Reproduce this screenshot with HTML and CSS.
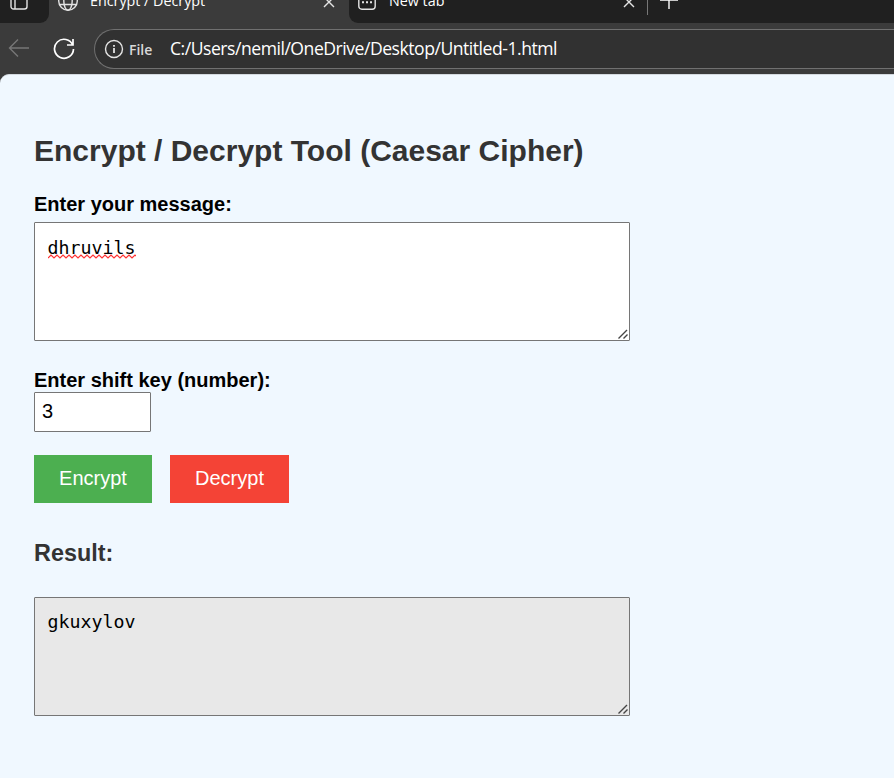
FILE: index.html
```html
<!DOCTYPE html>
<html lang="en">
<head>
<meta charset="utf-8">
<title>Encrypt / Decrypt</title>
<link rel="stylesheet" href="styles.css">
</head>
<body>
<header class="browser">
  <div class="tabs">
    <div class="tab-menu"><svg width="18" height="18" viewBox="0 0 18 18"><rect x="1" y="1" width="16" height="16" rx="2.5"/><path d="M5 1v16M1 5h16"/></svg></div>
    <div class="tab active">
      <svg width="20" height="20" viewBox="0 0 20 20"><circle cx="10" cy="10" r="9.3"/><ellipse cx="10" cy="10" rx="4.2" ry="9.3"/><path d="M1.5 6.5h17M1.5 13.5h17"/></svg>
      <span class="tab-title title-one">Encrypt / Decrypt</span>
      <svg class="close" width="12" height="12" viewBox="0 0 12 12"><path d="M1 1l10 10M11 1L1 11"/></svg>
    </div>
    <div class="tab">
      <svg width="18" height="18" viewBox="0 0 18 18"><rect x=".8" y=".8" width="16.4" height="16.4" rx="3"/><path d="M4 10.3h2M8 10.3h2M12 10.3h2" stroke-width="2"/></svg>
      <span class="tab-title title-two">New tab</span>
      <svg class="close" width="12" height="12" viewBox="0 0 12 12"><path d="M1 1l10 10M11 1L1 11"/></svg>
    </div>
    <div class="new-tab"><svg width="18" height="18" viewBox="0 0 18 18"><path d="M9 0v18M0 9h18"/></svg></div>
  </div>
  <div class="toolbar">
    <svg class="back" width="22" height="20" viewBox="0 0 22 20"><path d="M21 10H1.5M10 1.5L1.5 10l8.500 8.500"/></svg>
    <svg class="reload" width="22" height="22" viewBox="0 0 22 22"><path d="M19.800 7.200A9.500 9.500 0 1 0 20.500 11M20 1v6h-6"/></svg>
    <div class="address">
      <svg width="20" height="20" viewBox="0 0 20 20"><circle cx="10" cy="10" r="8.500"/><path d="M10 9v5" stroke-width="1.800"/><path d="M10 6v1.800" stroke-width="1.800"/></svg>
      <span class="scheme">File</span>
      <span class="url">C:/Users/nemil/OneDrive/Desktop/Untitled-1.html</span>
    </div>
  </div>
</header>
<main class="page">
  <h2>Encrypt / Decrypt Tool (Caesar Cipher)</h2>
  <label class="message-label" for="message">Enter your message:</label>
  <div class="field message-field">
    <textarea id="message" spellcheck="false">dhruvils</textarea>
    <svg class="squiggle" width="88" height="6" viewBox="0 0 88 6"><path d="M0 4l3-3 3 3 3-3 3 3 3-3 3 3 3-3 3 3 3-3 3 3 3-3 3 3 3-3 3 3 3-3 3 3 3-3 3 3 3-3 3 3 3-3 3 3 3-3 3 3 3-3 3 3 3-3 3 3 3-3 1 1"/></svg>
    <svg class="grip" width="10" height="10" viewBox="0 0 10 10"><path d="M.5 9.500l8.500-8.500M5.500 9.500l4-4"/></svg>
  </div>
  <label class="key-label" for="key">Enter shift key (number):</label>
  <input id="key" type="text" value="3">
  <div class="actions">
    <button class="encrypt">Encrypt</button>
    <button class="decrypt">Decrypt</button>
  </div>
  <h3>Result:</h3>
  <div class="field result-field">
    <textarea class="result" readonly spellcheck="false">gkuxylov</textarea>
    <svg class="grip" width="10" height="10" viewBox="0 0 10 10"><path d="M.5 9.500l8.500-8.500M5.500 9.500l4-4"/></svg>
  </div>
</main>
</body>
</html>
```
FILE: styles.css
```css
* { box-sizing: border-box; }
html, body { height: 100%; }
body {
  margin: 0;
  overflow: hidden;
  background: #3b3b3b;
  font-family: "Liberation Sans", Arial, sans-serif;
  font-size: 20px;
}
svg { display: block; flex: none; fill: none; stroke: #e4e4e4; stroke-width: 1.4; }
.browser {
  height: 74px;
  overflow: hidden;
  color: #fff;
  font-family: "Open Sans", "Noto Sans", sans-serif;
}
.tabs { display: flex; height: 46px; margin-top: -23px; background: #3b3b3b; }
.tab-menu { width: 49px; padding: 15px 0 0 10px; background: #202020; border-radius: 0 0 9px 0; }
.tab { display: flex; align-items: center; width: 299px; padding: 2px 14px 0 18px; background: #202020; }
.tab-menu + .tab { width: 300px; padding-left: 9px; background: #3b3b3b; }
.tab:not(.active) { padding: 2px 13px 0 9px; border-radius: 0 0 0 9px; }
.tab-title { font-size: 14.3px; line-height: 20px; white-space: nowrap; }
.title-one { margin-left: 12px; }
.title-two { margin-left: 13px; }
.close { margin-left: auto; margin-top: 1px; }
.new-tab { flex: 1; margin-left: -1px; padding: 14px 0 0 13px; background: linear-gradient(#777, #777) 0 0 / 1px 38px no-repeat #202020; }
.new-tab svg { stroke: #fff; }
.toolbar { display: flex; height: 51px; padding: 6px 0 5px 8px; }
.back { margin-top: 9px; stroke: #777; }
.reload { margin: 9px 0 0 23px; stroke: #fff; stroke-width: 1.7; }
.address {
  display: flex;
  align-items: center;
  flex: 1;
  height: 40px;
  margin-left: 19px;
  padding-left: 9px;
  border: 1px solid #707070;
  border-right: 0;
  border-radius: 20px 0 0 20px;
  background: #313131;
}
.scheme { width: 41px; margin-left: 5px; color: #d8d8d8; font-size: 14px; font-weight: 600; }
.url { padding-bottom: 2px; font-size: 17.6px; letter-spacing: -0.48px; white-space: nowrap; }
.page {
  height: 704px;
  padding: 57px 34px 0;
  border-top: 1px solid #d3d9df;
  border-radius: 9px 0 0 0;
  background: #f0f8ff;
}
h2, h3 { margin: 0; color: #333; white-space: nowrap; }
h2 { font-size: 30px; line-height: 38px; }
h3 { margin-top: 36px; font-size: 23.4px; line-height: 28px; }
label { display: block; font-weight: bold; line-height: 24px; white-space: nowrap; }
.message-label { margin-top: 22px; }
.key-label { margin-top: 27px; }
.field { position: relative; width: 596px; }
.message-field { margin-top: 6px; }
.result-field { margin-top: 30px; }
textarea {
  display: block;
  width: 100%;
  height: 119px;
  margin: 0;
  padding: 12px 12px 12px 12.5px;
  border: 1px solid #767676;
  border-radius: 1px;
  background: #fff;
  color: #000;
  font: 18.27px/24px "DejaVu Sans Mono", monospace;
  outline: 0;
  resize: none;
}
#message { padding-top: 13px; }
.squiggle { position: absolute; left: 14px; top: 32px; stroke: #f33; stroke-width: 1.2; }
.grip { position: absolute; right: 2px; bottom: 2px; stroke: #444; }
input {
  display: block;
  width: 117px;
  height: 40px;
  padding: 0 7px 2px;
  border: 1px solid #767676;
  border-radius: 1px;
  font: 20px "Liberation Sans", Arial, sans-serif;
}
.actions { display: flex; gap: 18px; margin-top: 23px; }
button {
  width: 118px;
  height: 48px;
  padding: 0 0 2px;
  border: 0;
  color: #fff;
  font: 20px "Liberation Sans", Arial, sans-serif;
}
.encrypt { background: #4caf50; }
.decrypt { width: 119px; background: #f44336; }
.result { background: #e8e8e8; }
```
